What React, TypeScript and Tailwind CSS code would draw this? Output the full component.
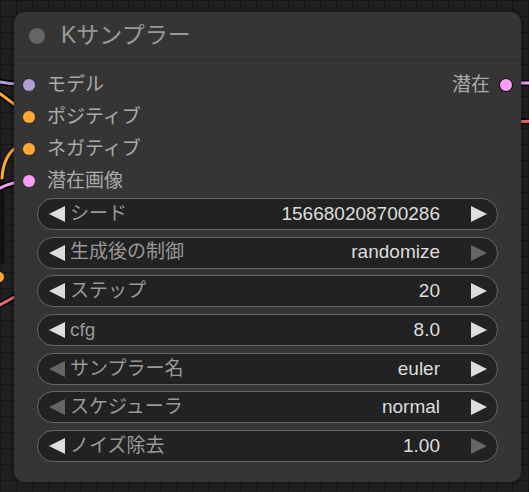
import { ReactNode } from "react";

type Widget = {
  label: string;
  value: string;
  leftOn: boolean;
  rightOn: boolean;
};

const widgets: Widget[] = [
  { label: "シード", value: "156680208700286", leftOn: true, rightOn: true },
  { label: "生成後の制御", value: "randomize", leftOn: true, rightOn: false },
  { label: "ステップ", value: "20", leftOn: true, rightOn: true },
  { label: "cfg", value: "8.0", leftOn: true, rightOn: true },
  { label: "サンプラー名", value: "euler", leftOn: false, rightOn: true },
  { label: "スケジューラ", value: "normal", leftOn: false, rightOn: true },
  { label: "ノイズ除去", value: "1.00", leftOn: true, rightOn: false },
];

const inputs = [
  { label: "モデル", color: "bg-[#b39ddb]" },
  { label: "ポジティブ", color: "bg-[#ffa931]" },
  { label: "ネガティブ", color: "bg-[#ffa931]" },
  { label: "潜在画像", color: "bg-[#ff9cf9]" },
];

function Arrow({ dir, on }: { dir: "left" | "right"; on: boolean }) {
  return (
    <svg width="16" height="16" viewBox="0 0 16 16" className="shrink-0">
      <polygon
        points={dir === "left" ? "16,0 16,16 0,8" : "0,0 0,16 16,8"}
        fill={on ? "#dddddd" : "#666666"}
      />
    </svg>
  );
}

function Row({ children }: { children: ReactNode }) {
  return <div className="flex h-[32px] items-center">{children}</div>;
}

export default function App() {
  return (
    <div className="relative h-[492px] w-[529px] overflow-hidden bg-[#202020] bg-[image:linear-gradient(to_right,#161616_1px,transparent_1px),linear-gradient(to_bottom,#161616_1px,transparent_1px)] bg-[size:16px_16px] pl-[14px] pt-[12px] font-['Liberation_Sans','Noto_Sans_CJK_JP',sans-serif]">
      {/* links behind the node */}
      <svg className="absolute inset-0" width="529" height="492">
        <g fill="none" strokeLinecap="round">
          <path d="M -4 81 C 4 83, 10 84, 20 84" stroke="#000" strokeWidth="6" />
          <path d="M -4 81 C 4 83, 10 84, 20 84" stroke="#b39ddb" strokeWidth="3" />
          <path d="M -2 92 L 18 107" stroke="#000" strokeWidth="6" />
          <path d="M -2 92 L 18 107" stroke="#ffa931" strokeWidth="3" />
          <path d="M 18 146 C 8 152, 3 164, 2 180 L 2 262" stroke="#111" strokeWidth="5" />
          <path d="M 18 146 C 8 152, 3 164, 2 178" stroke="#ffa931" strokeWidth="3" />
          <path d="M -4 190 C 4 186, 10 183, 20 182" stroke="#000" strokeWidth="6" />
          <path d="M -4 190 C 4 186, 10 183, 20 182" stroke="#ff9cf9" strokeWidth="3" />
          <circle cx="-1" cy="277" r="5" fill="#ffa931" />
          <path d="M -4 307 L 20 294" stroke="#000" strokeWidth="6" />
          <path d="M -4 307 L 20 294" stroke="#ef6b6b" strokeWidth="3" />
          <path d="M 510 83 L 535 83" stroke="#000" strokeWidth="6" />
          <path d="M 510 83 L 535 83" stroke="#ff9cf9" strokeWidth="3" />
          <path d="M 510 122 L 535 121" stroke="#000" strokeWidth="6" />
          <path d="M 510 122 L 535 121" stroke="#ef6b6b" strokeWidth="3" />
        </g>
      </svg>

      {/* node */}
      <div className="relative flex h-[470px] w-[507px] flex-col rounded-[10px] bg-[#353535] shadow-[0_0_6px_rgba(0,0,0,0.5)]">
        <div className="flex h-[48px] items-center gap-[16px] border-b border-[#2b2b2b] pl-[15px]">
          <div className="h-[16px] w-[16px] rounded-full bg-[#666]" />
          <span className="text-[23px] text-[#999]">Kサンプラー</span>
        </div>

        <div className="flex pt-[9px]">
          <div className="flex flex-1 flex-col">
            {inputs.map((inp) => (
              <Row key={inp.label}>
                <div className={`ml-[9px] h-[12px] w-[12px] rounded-full ${inp.color}`} />
                <span className="ml-[12px] text-[19px] text-[#aaa]">{inp.label}</span>
              </Row>
            ))}
          </div>
          <div className="flex flex-col">
            <Row>
              <span className="text-[19px] text-[#aaa]">潜在</span>
              <div className="ml-[9px] mr-[8px] h-[14px] w-[14px] rounded-full border-[1.5px] border-black bg-[#ff9cf9]" />
            </Row>
          </div>
        </div>

        <div className="mt-[1px] flex flex-col gap-[6.7px] px-[23px]">
          {widgets.map((w) => (
            <div
              key={w.label}
              className="flex h-[32px] items-center rounded-full border border-[#666] bg-[#222] pl-[11px] pr-[10px]"
            >
              <Arrow dir="left" on={w.leftOn} />
              <span className="ml-[5px] flex-1 text-[19px] text-[#999]">{w.label}</span>
              <span className="text-[19px] text-[#ddd]">{w.value}</span>
              <div className="ml-[31px]">
                <Arrow dir="right" on={w.rightOn} />
              </div>
            </div>
          ))}
        </div>
      </div>
    </div>
  );
}
